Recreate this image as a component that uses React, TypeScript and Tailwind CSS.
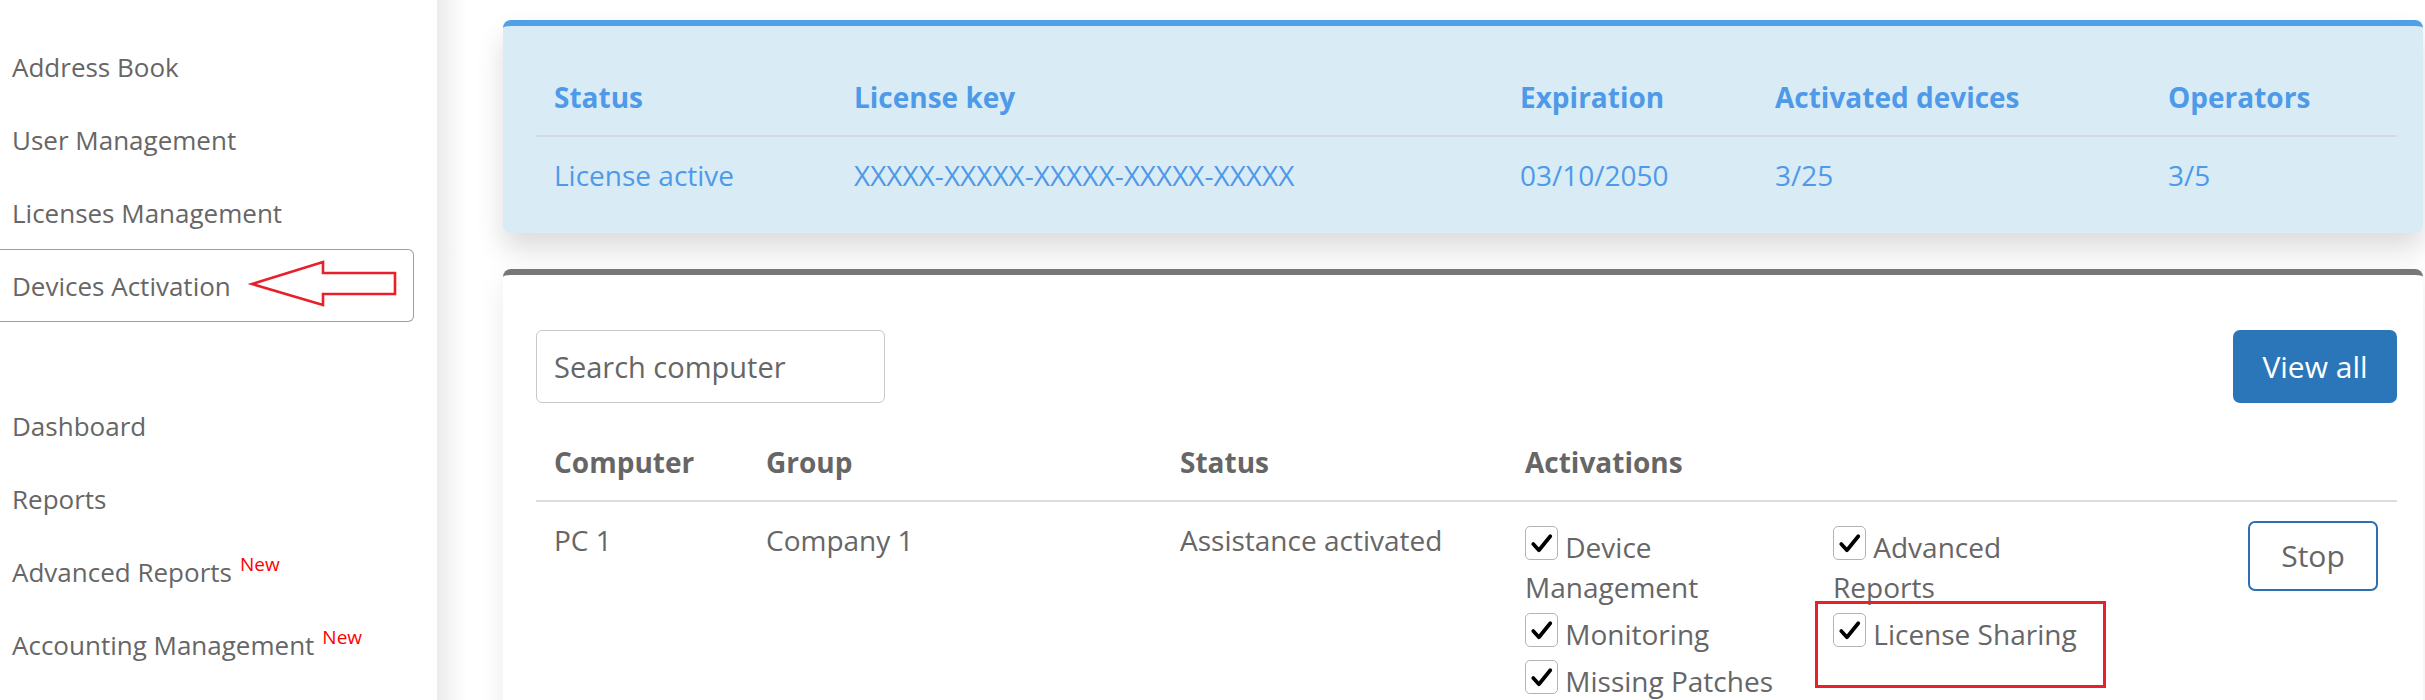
const NAV_TOP = [
  { label: 'Address Book' },
  { label: 'User Management' },
  { label: 'Licenses Management' },
  { label: 'Devices Activation', active: true },
]

const NAV_BOTTOM = [
  { label: 'Dashboard' },
  { label: 'Reports' },
  { label: 'Advanced Reports', isNew: true },
  { label: 'Accounting Management', isNew: true },
]

const ACTIVATIONS = ['Device Management', 'Advanced Reports', 'Monitoring', 'License Sharing', 'Missing Patches']

function NavItem({ label, active, isNew }: { label: string; active?: boolean; isNew?: boolean }) {
  return (
    <div
      className={`relative flex h-[73px] w-[414px] items-center pl-[12px] text-[26px] text-[#666] ${
        active ? 'rounded-r-[6px] border-y-[1.5px] border-r-[1.5px] border-[#9d9d9d]' : ''
      }`}
    >
      <span className="leading-[36px]">
        {label}
        {isNew && <span className="ml-[8px] align-[11px] text-[19px] leading-none text-[#ff0000]">New</span>}
      </span>
      {active && (
        // red annotation arrow pointing at the active item
        <svg className="absolute left-0 top-[-1.5px] h-[73px] w-[416px]" viewBox="0 0 416 73" fill="none">
          <polygon
            points="252,35 323,13 323,24 395,24 395,45 323,45 323,56"
            stroke="#e8202a"
            strokeWidth="2.6"
            strokeLinejoin="miter"
          />
        </svg>
      )}
    </div>
  )
}

function Checkbox() {
  return (
    <span className="mb-[5px] mt-[6px] inline-block h-[34px] w-[33px] rounded-[5px] border-[1.5px] border-[#b3b3b3] bg-white align-[-7px]">
      <svg viewBox="0 0 30 31" className="h-full w-full">
        <polyline points="7,16.5 12.5,22.5 23.5,9" fill="none" stroke="#000" strokeWidth="3.6" strokeLinecap="round" strokeLinejoin="round" />
      </svg>
    </span>
  )
}

export default function App() {
  return (
    <div className="flex min-h-[700px] w-full overflow-hidden bg-white font-['Open_Sans',sans-serif]">
      <aside className="w-[437px] shrink-0 bg-white pt-[30px]">
        {NAV_TOP.map((item) => (
          <NavItem key={item.label} {...item} />
        ))}
        <div className="h-[67px]" />
        {NAV_BOTTOM.map((item) => (
          <NavItem key={item.label} {...item} />
        ))}
      </aside>

      <main className="min-w-0 flex-1 bg-[linear-gradient(to_right,#ececec,#ffffff_30px)] pl-[66px] pr-[2px] pt-[20px]">
        {/* License summary */}
        <section className="rounded-[8px] border-t-[6px] border-t-[#519ee9] bg-[#d9ecf6] pb-[20px] pl-[33px] pr-[26px] pt-[33px] shadow-[0_16px_28px_rgba(0,0,0,0.14)]">
          <div className="grid grid-cols-[300px_666px_255px_393px_247px] text-[28px] leading-[40px] text-[#4e9ae8]">
            {['Status', 'License key', 'Expiration', 'Activated devices', 'Operators'].map((h) => (
              <div key={h} className="border-b-2 border-[#d3dbe0] px-[18px] py-[18px] font-bold">
                {h}
              </div>
            ))}
            {['License active', 'XXXXX-XXXXX-XXXXX-XXXXX-XXXXX', '03/10/2050', '3/25', '3/5'].map((v) => (
              <div key={v} className="px-[18px] py-[18px]">
                {v}
              </div>
            ))}
          </div>
        </section>

        {/* Devices */}
        <section className="mt-[36px] rounded-[8px] border-t-[6px] border-t-[#777777] bg-white pb-[40px] pl-[33px] pr-[26px] pt-[55px] shadow-[0_10px_30px_rgba(0,0,0,0.08)]">
          <div className="flex items-start justify-between">
            <input
              placeholder="Search computer"
              className="h-[73px] w-[349px] rounded-[6px] border-[1.5px] border-[#c9c9c9] bg-white pl-[17px] text-[29px] text-[#666] outline-none placeholder:text-[#666]"
            />
            <button className="h-[73px] w-[164px] rounded-[7px] bg-[#2b76b9] text-[30px] text-white">View all</button>
          </div>

          <div className="grid grid-cols-[212px_414px_345px_723px_167px] text-[28px] leading-[40px] text-[#666]">
            {['Computer', 'Group', 'Status', 'Activations', ''].map((h, i) => (
              <div key={i} className="border-b-2 border-[#dddddd] px-[18px] pb-[18px] pt-[39px] font-bold">
                {h || '\u00a0'}
              </div>
            ))}
            <div className="px-[18px] pt-[18px]">PC 1</div>
            <div className="px-[18px] pt-[18px]">Company 1</div>
            <div className="px-[18px] pt-[18px]">Assistance activated</div>
            <div className="relative px-[18px] pt-[18px]">
              <div className="grid grid-cols-[308px_308px]">
                {ACTIVATIONS.map((a) => (
                  <div key={a} className="w-[262px]">
                    <Checkbox /> {a}
                  </div>
                ))}
              </div>
              {/* red annotation box */}
              <div className="absolute left-[308px] top-[99px] h-[87px] w-[291px] border-[3px] border-[#e8202a]" />
            </div>
            <div className="px-[18px] pt-[19px]">
              <button className="h-[70px] w-[130px] rounded-[7px] border-2 border-[#2d6fb0] bg-white text-[30px] text-[#666]">
                Stop
              </button>
            </div>
          </div>
        </section>
      </main>
    </div>
  )
}
